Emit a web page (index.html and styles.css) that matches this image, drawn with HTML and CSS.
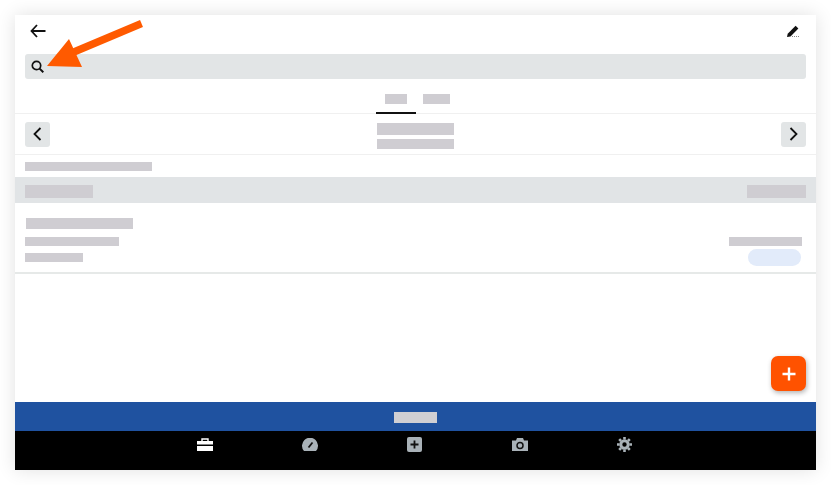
FILE: index.html
```html
<!DOCTYPE html>
<html>

<head>
    <meta charset="utf-8">
    <title>Search</title>
    <link rel="stylesheet" href="styles.css">
</head>

<body>
    <div class="screen">
        <!-- top bar -->
        <div class="topbar">
            <svg class="icon" width="16" height="14" viewBox="0 0 16 14">
                <path d="M7 1 1.500 7 7 13M2 7h13.500" fill="none" stroke="#111" stroke-width="1.800"/>
            </svg>
            <svg class="icon" width="12" height="12" viewBox="0 0 12 12">
                <path d="M0 12l.7-3.200L8.600 .8l2.800 2.700-7.900 8z" fill="#111"/>
                <path d="M5 11.500h7" stroke="#888" stroke-width="1" stroke-dasharray="1 1"/>
            </svg>
        </div>

        <div class="search">
            <svg width="13" height="13" viewBox="0 0 13 13">
                <circle cx="5.500" cy="5.500" r="4.200" fill="none" stroke="#111" stroke-width="1.700"/>
                <path d="M8.600 8.600 12.300 12.300" stroke="#111" stroke-width="2"/>
            </svg>
        </div>

        <!-- tabs -->
        <div class="tabs">
            <div class="tab active"><span class="bar tab-a"></span></div>
            <div class="tab second"><span class="bar tab-b"></span></div>
        </div>

        <!-- pager -->
        <div class="pager">
            <button class="page-btn">
                <svg width="9" height="14" viewBox="0 0 9 14"><path d="M7.500 1 1.500 7l6 6" fill="none" stroke="#111" stroke-width="1.800"/></svg>
            </button>
            <div class="pager-title">
                <span class="bar title-a"></span>
                <span class="bar title-b"></span>
            </div>
            <button class="page-btn">
                <svg width="9" height="14" viewBox="0 0 9 14"><path d="M1.500 1l6 6-6 6" fill="none" stroke="#111" stroke-width="1.800"/></svg>
            </button>
        </div>

        <div class="section-label"><span class="bar label-a"></span></div>

        <div class="band">
            <span class="bar band-a"></span>
            <span class="bar band-b"></span>
        </div>

        <!-- list -->
        <div class="row">
            <div class="row-left">
                <span class="bar row-a"></span>
                <span class="bar row-b"></span>
                <span class="bar row-c"></span>
            </div>
            <div class="row-right">
                <span class="bar row-d"></span>
                <span class="pill"></span>
            </div>
        </div>

        <div class="spacer"></div>

        <div class="bluebar"><span class="bar blue-a"></span></div>

        <!-- bottom nav -->
        <div class="nav">
            <div class="nav-item">
                <svg width="16" height="13" viewBox="0 0 16 13">
                    <path d="M5 3V1h6v2" fill="none" stroke="#fff" stroke-width="1.400"/>
                    <path d="M0 3h16v3.600H0zM0 8h16v5H0z" fill="#fff"/>
                </svg>
            </div>
            <div class="nav-item">
                <svg width="16" height="13" viewBox="0 0 16 13">
                    <path d="M2 13A8 8 0 1 1 14 13z" fill="#a9b2b8"/>
                    <path d="M6.500 9.500 10.500 4.500" stroke="#111" stroke-width="1.800"/>
                </svg>
            </div>
            <div class="nav-item">
                <svg width="15" height="15" viewBox="0 0 15 15">
                    <rect width="15" height="15" rx="2" fill="#a9b2b8"/>
                    <path d="M7.500 3.500v8M3.500 7.500h8" stroke="#111" stroke-width="1.800"/>
                </svg>
            </div>
            <div class="nav-item">
                <svg width="16" height="13" viewBox="0 0 16 13">
                    <path d="M0 2.500h4L5 0h6l1 2.500h4V13H0z" fill="#a9b2b8"/>
                    <circle cx="8" cy="7.500" r="3" fill="none" stroke="#111" stroke-width="1.500"/>
                </svg>
            </div>
            <div class="nav-item">
                <svg width="15" height="15" viewBox="0 0 15 15">
                    <circle cx="7.500" cy="7.500" r="3.700" fill="none" stroke="#a9b2b8" stroke-width="3"/>
                    <path d="M7.500 0v15M0 7.500h15M2.200 2.200l10.600 10.600M12.800 2.200 2.200 12.800" stroke="#a9b2b8" stroke-width="2.600" stroke-dasharray="2.600 9.800 2.800"/>
                </svg>
            </div>
        </div>

        <button class="fab">
            <svg width="14" height="14" viewBox="0 0 14 14"><path d="M7 .5v13M.5 7h13" stroke="#fff" stroke-width="2.400"/></svg>
        </button>

        <!-- callout arrow -->
        <svg class="callout" width="100" height="60" viewBox="0 0 100 60">
            <path d="M15 42 94.500 8.500" fill="none" stroke="#ff5a00" stroke-width="7.500"/>
            <path d="M0 51 22 24 35 52z" fill="#ff5a00"/>
        </svg>
    </div>
</body>

</html>
```

FILE: styles.css
```css
body {
    margin: 0;
    padding: 15px;
    background-color: white;
    font-family: "Liberation Sans", sans-serif;
}

.screen {
    position: relative;
    display: flex;
    flex-direction: column;
    width: 801px;
    height: 455px;
    background-color: white;
    box-shadow: 0 0 18px rgba(0, 0, 0, .12);
}

.bar {
    display: block;
    background-color: #cfcdd2;
}

/*top bar*/

.topbar {
    display: flex;
    justify-content: space-between;
    align-items: center;
    height: 39px;
    padding: 0 17px 8px 15px;
    box-sizing: border-box;
}

.search {
    display: flex;
    align-items: center;
    height: 25px;
    margin: 0 10px;
    padding-left: 6px;
    background-color: #e2e5e6;
    border-radius: 3px;
}

/*tabs*/

.tabs {
    display: flex;
    justify-content: center;
    height: 35px;
    box-sizing: border-box;
    border-bottom: 1px solid #f0f0f0;
}

.tab {
    width: 40px;
    padding: 15px 0 0 9px;
    box-sizing: border-box;
}

.tab.active {
    border-bottom: 2px solid #111;
    height: 35px;
}

.tab.second {
    width: 39px;
    padding-left: 7px;
}

.tab-a {
    width: 22px;
    height: 10px;
}

.tab-b {
    width: 27px;
    height: 10px;
}

/*pager*/

.pager {
    display: flex;
    justify-content: space-between;
    align-items: center;
    height: 40px;
    padding: 0 10px;
    border-bottom: 1px solid #f0f0f0;
}

.page-btn {
    display: flex;
    justify-content: center;
    align-items: center;
    width: 25px;
    height: 25px;
    padding: 0;
    border: 0;
    border-radius: 3px;
    background-color: #e2e5e6;
}

.pager-title {
    display: flex;
    flex-direction: column;
    gap: 4px;
    margin-top: 4px;
}

.title-a {
    width: 77px;
    height: 12px;
}

.title-b {
    width: 77px;
    height: 10px;
}

.section-label {
    height: 22px;
    padding: 7px 10px 0;
    box-sizing: border-box;
}

.label-a {
    width: 127px;
    height: 9px;
}

.band {
    display: flex;
    justify-content: space-between;
    align-items: center;
    height: 26px;
    padding: 0 10px;
    background-color: #e1e4e6;
}

.band-a {
    width: 68px;
    height: 13px;
    margin-top: 2px;
}

.band-b {
    width: 59px;
    height: 13px;
    margin-top: 2px;
}

/*list*/

.row {
    display: flex;
    justify-content: space-between;
    height: 71px;
    padding: 15px 14px 0 10px;
    box-sizing: border-box;
    border-bottom: 2px solid #e6e9e8;
}

.row-a {
    width: 107px;
    height: 11px;
    margin-left: 1px;
}

.row-b {
    width: 94px;
    height: 9px;
    margin-top: 8px;
}

.row-c {
    width: 58px;
    height: 9px;
    margin-top: 7px;
}

.row-right {
    display: flex;
    flex-direction: column;
    align-items: flex-end;
    padding-top: 19px;
}

.row-d {
    width: 73px;
    height: 9px;
}

.pill {
    display: block;
    width: 53px;
    height: 17px;
    margin: 3px 1px 0 0;
    border-radius: 9px;
    background-color: #e2ebfa;
}

.spacer {
    flex: 1;
}

.bluebar {
    display: flex;
    justify-content: center;
    align-items: center;
    height: 29px;
    background-color: #1f52a0;
}

.blue-a {
    width: 43px;
    height: 11px;
    margin-top: 2px;
    background-color: #d0cfd3;
}

/*bottom nav*/

.nav {
    display: flex;
    height: 39px;
    padding-left: 137px;
    background-color: black;
}

.nav-item {
    display: flex;
    justify-content: center;
    width: 105px;
    height: 26px;
    align-items: center;
}

/*over the content*/

.fab {
    position: absolute;
    right: 10px;
    bottom: 79px;
    display: flex;
    justify-content: center;
    align-items: center;
    width: 35px;
    height: 35px;
    padding: 0;
    border: 0;
    border-radius: 7px;
    background-color: #ff5200;
    box-shadow: 1px 2px 5px rgba(0, 0, 0, .3);
}

.callout {
    position: absolute;
    left: 32px;
    top: 0;
    overflow: visible;
}
```
